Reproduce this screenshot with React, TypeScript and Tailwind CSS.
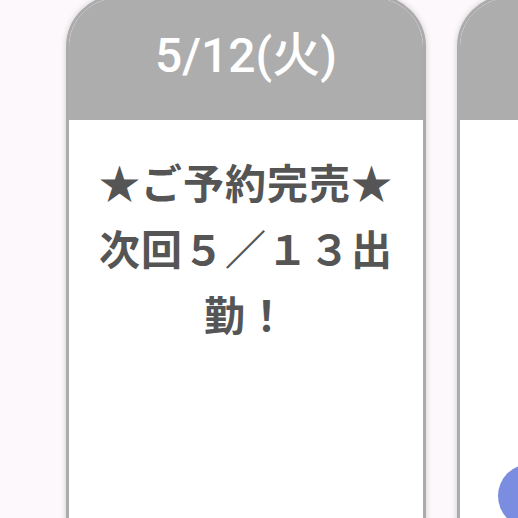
import React from 'react'

const font = { fontFamily: '"Noto Sans CJK JP", "Noto Sans", sans-serif' }
const headFont = { fontFamily: 'Roboto, "Noto Sans CJK JP", sans-serif' }

function DayCard({ date, body }: { date?: string; body?: string }) {
    return (
        <div className="w-[360px] shrink-0 h-[620px] rounded-t-[52px] border-[3px] border-[#ababab] bg-white overflow-hidden shadow-[0_0_6px_rgba(0,0,0,0.18)] flex flex-col">
            <div className="h-[122px] bg-[#adadad] flex items-center justify-center pb-[6px]">
                <span className="text-white text-[48px] font-medium leading-none" style={headFont}>
                    {date}
                </span>
            </div>
            <div className="px-[26px] pt-[28px] text-center text-[#555555] text-[41px] font-bold leading-[66px] tracking-[1px]">
                {body}
            </div>
        </div>
    )
}

export default function App() {
    return (
        <div className="relative w-[518px] h-[518px] overflow-hidden bg-[#fdf8fb]" style={font}>
            <div className="flex gap-[31px] pl-[66px] -mt-[5px]">
                <DayCard date="5/12(火)" body="★ご予約完売★次回５／１３出勤！" />
                <DayCard />
            </div>
            <div className="absolute left-[498px] top-[464px] w-[64px] h-[64px] rounded-full bg-[#7b8de0]" />
        </div>
    )
}
